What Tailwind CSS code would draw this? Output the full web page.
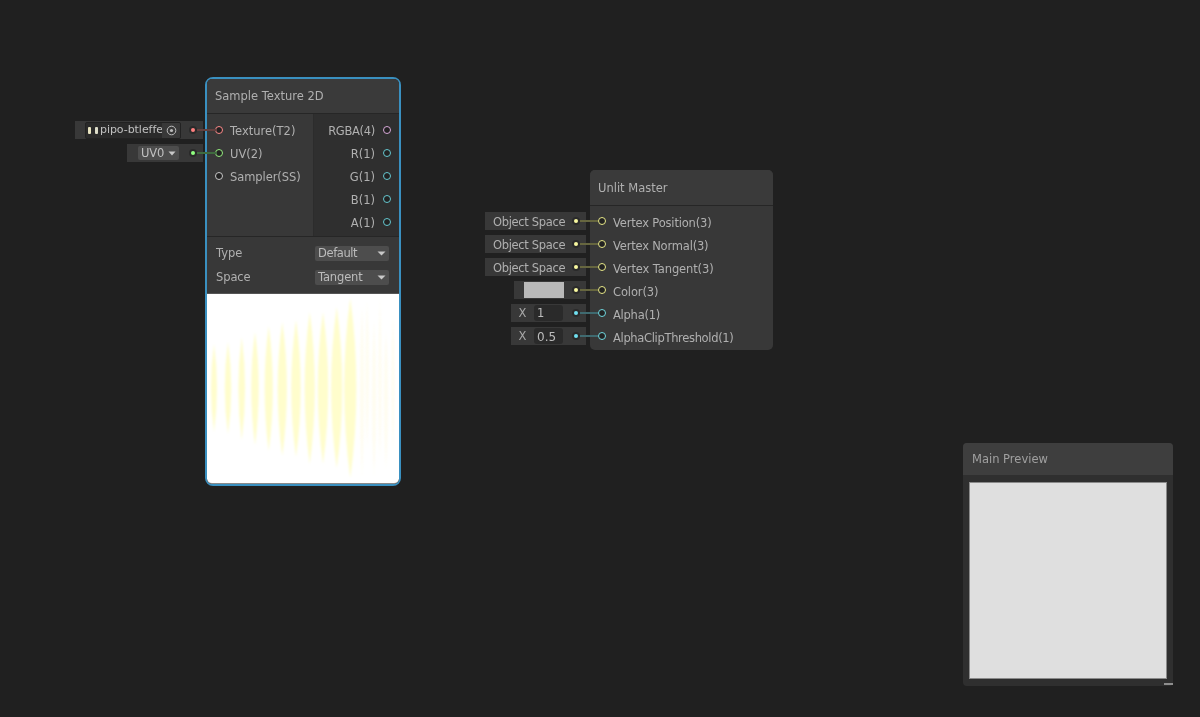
<!DOCTYPE html>
<html>
<head>
<meta charset="utf-8">
<script src="https://cdn.jsdelivr.net/npm/@tailwindcss/browser@4"></script>
</head>
<body class="m-0 overflow-hidden bg-[#202020]">
<div class="relative w-[1200px] h-[717px] bg-[#202020] font-['DejaVu_Sans',sans-serif] text-[11.5px] text-[#b0b0b0] overflow-hidden blur-[0.35px]">

  <!-- Sample Texture 2D node -->
  <div class="absolute left-[75px] top-[77px] flex items-start">
    <div class="relative z-10 w-[130px] mt-[44px] flex flex-col items-end gap-[5px]">
      <div class="relative w-[128px] h-[18px] mr-[2px] bg-[#383838] flex items-center">
        <div class="ml-[10px] w-[96px] h-[17px] rounded-[2px] bg-[#2a2a2a] border border-[#222222] flex items-center overflow-hidden">
          <span class="ml-[2px] w-[3px] h-[7px] rounded-[1px] bg-[#e8e4c0]"></span>
          <span class="ml-[4px] w-[3px] h-[7px] rounded-[1px] bg-[#dcdcc8]"></span>
          <span class="ml-[2px] pt-[1px] text-[#c0c0c0] text-[11px] tracking-[-0.05px] whitespace-nowrap w-[62px]">pipo-btleffe</span>
          <span class="flex-1 h-full bg-[#383838] flex items-center justify-center">
            <svg width="11" height="11" viewBox="0 0 11 11"><circle cx="5.5" cy="5.5" r="4.3" fill="none" stroke="#bcbcbc" stroke-width="1"/><circle cx="5.5" cy="5.5" r="1.6" fill="#bcbcbc"/></svg>
          </span>
        </div>
        <span class="absolute left-[122px] top-[8px] w-[20px] h-[2px] bg-[#64403f]"></span>
        <span class="absolute left-[116px] top-[7px] w-[4px] h-[4px] rounded-full bg-[#ff8080] shadow-[0_0_0_2px_#2a2a2a]"></span>
      </div>
      <div class="relative w-[76px] h-[18px] mr-[2px] bg-[#383838] flex items-center">
        <div class="ml-[11px] w-[41px] h-[14px] rounded-[2px] bg-[#4d4d4d] flex items-center pl-[3px] text-[#c0c0c0]">
          <span class="pt-[1px] tracking-[-0.2px]">UV0</span>
          <svg class="ml-[4px]" width="8" height="5" viewBox="0 0 8 5"><path d="M0.5 0.5H7.5L4 4.5Z" fill="#c8c8c8"/></svg>
        </div>
        <span class="absolute left-[70px] top-[8px] w-[20px] h-[2px] bg-[#3f6a3f]"></span>
        <span class="absolute left-[64px] top-[7px] w-[4px] h-[4px] rounded-full bg-[#90ff80] shadow-[0_0_0_2px_#2a2a2a]"></span>
      </div>
    </div>

    <div class="relative w-[196px] h-[409px] rounded-[8px] border-2 border-[#3a90c0]">
      <div class="w-full h-full rounded-[5px] overflow-hidden bg-[#383838] flex flex-col">
        <div class="h-[35px] shrink-0 bg-[#3a3a3a] border-b border-[#262626] pl-[8px] flex items-center pt-[1px]">Sample Texture 2D</div>
        <div class="h-[123px] shrink-0 flex border-b border-[#262626]">
          <div class="w-[106px] pt-[6px] flex flex-col">
            <div class="h-[23px] flex items-center pl-[8px] gap-[7px]"><span class="w-[8px] h-[8px] rounded-full border-[1.5px] border-[#ff8a8a] bg-[#222222] -mt-[4px]"></span><span class="mt-[1px]">Texture(T2)</span></div>
            <div class="h-[23px] flex items-center pl-[8px] gap-[7px]"><span class="w-[8px] h-[8px] rounded-full border-[1.5px] border-[#96ef80] bg-[#222222] -mt-[4px]"></span><span class="mt-[1px]">UV(2)</span></div>
            <div class="h-[23px] flex items-center pl-[8px] gap-[7px]"><span class="w-[8px] h-[8px] rounded-full border-[1.5px] border-[#c8c8c8] bg-[#222222] -mt-[4px]"></span><span class="mt-[1px] tracking-[-0.08px]">Sampler(SS)</span></div>
          </div>
          <div class="flex-1 bg-[#2f2f2f] border-l border-[#2c2c2c] pt-[6px] flex flex-col items-end pr-[8px]">
            <div class="h-[23px] flex items-center gap-[8px]"><span class="mt-[1px] tracking-[-0.3px]">RGBA(4)</span><span class="w-[8px] h-[8px] rounded-full border-[1.5px] border-[#d8a8d8] bg-[#222222] -mt-[4px]"></span></div>
            <div class="h-[23px] flex items-center gap-[8px]"><span class="mt-[1px]">R(1)</span><span class="w-[8px] h-[8px] rounded-full border-[1.5px] border-[#66c8d0] bg-[#222222] -mt-[4px]"></span></div>
            <div class="h-[23px] flex items-center gap-[8px]"><span class="mt-[1px]">G(1)</span><span class="w-[8px] h-[8px] rounded-full border-[1.5px] border-[#66c8d0] bg-[#222222] -mt-[4px]"></span></div>
            <div class="h-[23px] flex items-center gap-[8px]"><span class="mt-[1px]">B(1)</span><span class="w-[8px] h-[8px] rounded-full border-[1.5px] border-[#66c8d0] bg-[#222222] -mt-[4px]"></span></div>
            <div class="h-[23px] flex items-center gap-[8px]"><span class="mt-[1px]">A(1)</span><span class="w-[8px] h-[8px] rounded-full border-[1.5px] border-[#66c8d0] bg-[#222222] -mt-[4px]"></span></div>
          </div>
        </div>
        <div class="h-[56px] shrink-0 pt-[9px] pl-[9px] pr-[10px] flex flex-col gap-[9px]">
          <div class="h-[15px] flex items-center justify-between"><span class="pt-[1px]">Type</span>
            <div class="w-[74px] h-[15px] rounded-[2px] bg-[#4d4d4d] flex items-center justify-between pl-[3px] pr-[3px] text-[#bcbcbc]"><span class="pt-[1px] tracking-[-0.4px]">Default</span><svg width="9" height="5" viewBox="0 0 9 5"><path d="M0.5 0.5H8.5L4.5 4.5Z" fill="#c8c8c8"/></svg></div>
          </div>
          <div class="h-[15px] flex items-center justify-between"><span class="pt-[1px] tracking-[-0.1px]">Space</span>
            <div class="w-[74px] h-[15px] rounded-[2px] bg-[#4d4d4d] flex items-center justify-between pl-[3px] pr-[3px] text-[#bcbcbc]"><span class="pt-[1px] tracking-[-0.15px]">Tangent</span><svg width="9" height="5" viewBox="0 0 9 5"><path d="M0.5 0.5H8.5L4.5 4.5Z" fill="#c8c8c8"/></svg></div>
          </div>
        </div>
        <div class="flex-1 bg-white overflow-hidden border-t border-[#555555] border-b border-b-[#8a8a8a] rounded-b-[5px]">
          <svg class="block" width="192" height="192" viewBox="207 294 192 192">
            <defs><filter id="b" x="-100%" y="-20%" width="300%" height="140%"><feGaussianBlur stdDeviation="1"/></filter><filter id="c" x="-300%" y="-20%" width="700%" height="140%"><feGaussianBlur stdDeviation="0.8"/></filter></defs>
            <g fill="#fffdcc" filter="url(#b)">
              <path d="M214 344Q220 388 214 432Q208 388 214 344Z"/>
              <path d="M228 342Q234.500 388 228 434Q221.500 388 228 342Z"/>
              <path d="M241.700 337Q248.500 388 241.700 440Q235 388 241.700 337Z"/>
              <path d="M255 332Q262.500 388 255 445Q247.500 388 255 332Z"/>
              <path d="M268.700 326Q277 388 268.700 451Q260.500 388 268.700 326Z"/>
              <path d="M282.300 322Q291.500 388 282.300 456Q273 388 282.300 322Z"/>
              <path d="M296 320Q305.500 388 296 457Q286.500 388 296 320Z"/>
              <path d="M309.700 312Q320 388 309.700 464Q299.500 388 309.700 312Z"/>
              <path d="M323 312Q333.500 388 323 464Q312.500 388 323 312Z"/>
              <path d="M336.700 307Q348 388 336.700 468Q325.500 388 336.700 307Z"/>
              <path d="M350.300 298Q362.500 388 350.300 478Q338 388 350.300 298Z"/>
            </g>
            <g fill="#fff9d8" opacity="0.4" filter="url(#c)">
              <path d="M362 305Q366 390 362 480Q358 390 362 305Z"/>
              <path d="M367 300Q371 370 367 450Q364 370 367 300Z"/>
              <path d="M374 320Q378 395 374 478Q370 395 374 320Z"/>
              <path d="M380 296Q383 380 380 460Q377 380 380 296Z"/>
              <path d="M386 330Q390 395 386 470Q382 395 386 330Z"/>
              <path d="M393 310Q396 380 393 455Q390 380 393 310Z"/>
            </g>
          </svg>
        </div>
      </div>
    </div>
  </div>

  <!-- Unlit Master node -->
  <div class="absolute left-[485px] top-[170px] flex items-start">
    <div class="relative z-10 w-[105px] mt-[42px] flex flex-col items-end gap-[5px]">
      <div class="relative w-[105px] h-[18px]"><div class="w-[101px] h-[18px] bg-[#383838] pl-[8px] pt-[3px] flex items-center tracking-[-0.33px]">Object Space</div><span class="absolute left-[95px] top-[8px] w-[18px] h-[2px] bg-[#66663f]"></span><span class="absolute left-[89px] top-[7px] w-[4px] h-[4px] rounded-full bg-[#f8f8a0] shadow-[0_0_0_2px_#2a2a2a]"></span></div>
      <div class="relative w-[105px] h-[18px]"><div class="w-[101px] h-[18px] bg-[#383838] pl-[8px] pt-[3px] flex items-center tracking-[-0.33px]">Object Space</div><span class="absolute left-[95px] top-[8px] w-[18px] h-[2px] bg-[#66663f]"></span><span class="absolute left-[89px] top-[7px] w-[4px] h-[4px] rounded-full bg-[#f8f8a0] shadow-[0_0_0_2px_#2a2a2a]"></span></div>
      <div class="relative w-[105px] h-[18px]"><div class="w-[101px] h-[18px] bg-[#383838] pl-[8px] pt-[3px] flex items-center tracking-[-0.33px]">Object Space</div><span class="absolute left-[95px] top-[8px] w-[18px] h-[2px] bg-[#66663f]"></span><span class="absolute left-[89px] top-[7px] w-[4px] h-[4px] rounded-full bg-[#f8f8a0] shadow-[0_0_0_2px_#2a2a2a]"></span></div>
      <div class="relative w-[76px] h-[18px]"><div class="w-[72px] h-[18px] bg-[#383838] pl-[10px] flex items-center"><span class="w-[40px] h-[16px] bg-[#b9b9b9]"></span></div><span class="absolute left-[66px] top-[8px] w-[18px] h-[2px] bg-[#66663f]"></span><span class="absolute left-[60px] top-[7px] w-[4px] h-[4px] rounded-full bg-[#f8f8a0] shadow-[0_0_0_2px_#2a2a2a]"></span></div>
      <div class="relative w-[79px] h-[18px]"><div class="w-[75px] h-[18px] bg-[#383838] flex items-center"><span class="w-[23px] text-center pt-[1px] text-[#a8a8a8]">X</span><span class="w-[29px] h-[16px] pl-[3px] pt-[1px] rounded-[3px] bg-[#2a2a2a] text-[#bcbcbc] flex items-center">1</span></div><span class="absolute left-[69px] top-[8px] w-[18px] h-[2px] bg-[#3f6a70]"></span><span class="absolute left-[63px] top-[7px] w-[4px] h-[4px] rounded-full bg-[#70e0f0] shadow-[0_0_0_2px_#2a2a2a]"></span></div>
      <div class="relative w-[79px] h-[18px]"><div class="w-[75px] h-[18px] bg-[#383838] flex items-center"><span class="w-[23px] text-center pt-[1px] text-[#a8a8a8]">X</span><span class="w-[29px] h-[16px] pl-[3px] pt-[1px] rounded-[3px] bg-[#2a2a2a] text-[#bcbcbc] text-[12px] flex items-center">0.5</span></div><span class="absolute left-[69px] top-[8px] w-[18px] h-[2px] bg-[#3f6a70]"></span><span class="absolute left-[63px] top-[7px] w-[4px] h-[4px] rounded-full bg-[#70e0f0] shadow-[0_0_0_2px_#2a2a2a]"></span></div>
    </div>
    <div class="w-[183px] h-[180px] rounded-[5px] bg-[#383838] overflow-hidden">
      <div class="h-[36px] bg-[#3a3a3a] border-b border-[#262626] pl-[8px] pt-[2px] flex items-center">Unlit Master</div>
      <div class="pt-[5px] flex flex-col">
        <div class="h-[23px] flex items-center pl-[8px] gap-[7px]"><span class="w-[8px] h-[8px] rounded-full border-[1.5px] border-[#e8e888] bg-[#222222] -mt-[4px]"></span><span class="mt-[2px] tracking-[-0.18px]">Vertex Position(3)</span></div>
        <div class="h-[23px] flex items-center pl-[8px] gap-[7px]"><span class="w-[8px] h-[8px] rounded-full border-[1.5px] border-[#e8e888] bg-[#222222] -mt-[4px]"></span><span class="mt-[2px] tracking-[-0.2px]">Vertex Normal(3)</span></div>
        <div class="h-[23px] flex items-center pl-[8px] gap-[7px]"><span class="w-[8px] h-[8px] rounded-full border-[1.5px] border-[#e8e888] bg-[#222222] -mt-[4px]"></span><span class="mt-[2px] tracking-[-0.12px]">Vertex Tangent(3)</span></div>
        <div class="h-[23px] flex items-center pl-[8px] gap-[7px]"><span class="w-[8px] h-[8px] rounded-full border-[1.5px] border-[#e8e888] bg-[#222222] -mt-[4px]"></span><span class="mt-[2px] tracking-[-0.12px]">Color(3)</span></div>
        <div class="h-[23px] flex items-center pl-[8px] gap-[7px]"><span class="w-[8px] h-[8px] rounded-full border-[1.5px] border-[#70d8e0] bg-[#222222] -mt-[4px]"></span><span class="mt-[2px] tracking-[-0.25px]">Alpha(1)</span></div>
        <div class="h-[23px] flex items-center pl-[8px] gap-[7px]"><span class="w-[8px] h-[8px] rounded-full border-[1.5px] border-[#70d8e0] bg-[#222222] -mt-[4px]"></span><span class="mt-[2px] tracking-[-0.33px]">AlphaClipThreshold(1)</span></div>
      </div>
    </div>
  </div>

  <!-- Main Preview -->
  <div class="absolute left-[963px] top-[443px] w-[210px] h-[243px] rounded-[4px] bg-[#2f2f2f] overflow-hidden flex flex-col">
    <div class="h-[32px] shrink-0 bg-[#3e3e3e] pl-[9px] pt-[2px] flex items-center text-[#a0a0a0]">Main Preview</div>
    <div class="flex-1 pt-[7px] pl-[6px]">
      <div class="w-[198px] h-[197px] bg-[#dfdfdf] border border-[#8a8a8a]"></div>
    </div>
  </div>
  <div class="absolute left-[1164px] top-[683px] w-[9px] h-[2px] bg-[#8e8e8e]"></div>
</div>
</body>
</html>
